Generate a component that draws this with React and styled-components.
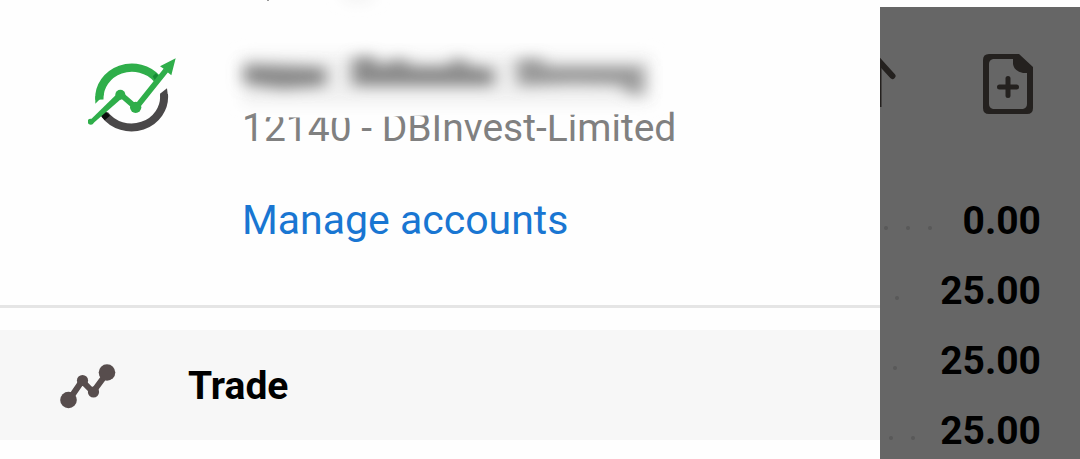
import React from "react";
import styled, { createGlobalStyle } from "styled-components";

const balances = [
  { id: 1, value: "0.00", dots: 3, indent: 4 },
  { id: 2, value: "25.00", dots: 1, indent: 15 },
  { id: 3, value: "25.00", dots: 1, indent: 13 },
  { id: 4, value: "25.00", dots: 2, indent: 9 },
];

const BrokerLogo = () => (
  <svg width="88" height="76" viewBox="54 50 264 228" fill="none" aria-hidden="true">
    <path d="M88 178A98 92 0 0 1 262 116" stroke="#2fae4a" strokeWidth="25" />
    <path d="M76 190L76 168L102 160L100 166Z" fill="#2fae4a" />
    <path d="M248 108L258 98L270 112L258 126Z" fill="#168a35" />
    <path d="M282 162A98 92 0 0 1 104 222" stroke="#4a4849" strokeWidth="24" />
    <path d="M270 160L291 144L294 170L271 172Z" fill="#4a4849" />
    <path d="M90 223L104 210L120 226L104 240Z" fill="#0c0c0c" />
    <path d="M60 240L146 156L160 170L68 250Z" fill="#2fae4a" />
    <path d="M152 162L198 202L288 90" stroke="#2fae4a" strokeWidth="17" />
    <circle cx="62" cy="244" r="9" fill="#2fae4a" />
    <circle cx="151" cy="163" r="15" fill="#2fae4a" />
    <circle cx="197" cy="201" r="17" fill="#2fae4a" />
    <path d="M317 54L270 78L279 84L291 94L304 105Z" fill="#2fae4a" />
  </svg>
);

// hidden holder name, smeared over the top edge of the account number
const HiddenName = () => (
  <Smear viewBox="0 0 450 120" role="img" aria-label="Name hidden">
    <defs>
      <filter id="soft" x="-20%" y="-80%" width="140%" height="260%">
        <feGaussianBlur stdDeviation="8 7" />
      </filter>
      <filter id="haze" x="-20%" y="-60%" width="140%" height="220%">
        <feGaussianBlur stdDeviation="7" />
      </filter>
    </defs>
    <path d="M18 40H450V108L400 114L300 115L200 115L100 118L18 117Z" fill="#fefefe" />
    <g filter="url(#haze)" fill="#f1f1f1">
      <rect x="0" y="54" width="410" height="50" />
      <ellipse cx="116" cy="-3" rx="18" ry="5" />
    </g>
    <g filter="url(#soft)" fill="#8a8a8a">
      <path d="M2 64L84 67V86L40 89L2 84Z" />
      <path d="M110 58L130 56L138 66L158 58L170 66L206 66L216 57L228 66L252 68V86H110Z" />
      <path d="M274 60L296 58L306 66H402L402 94H388L378 85L330 84L276 86Z" opacity="0.85" />
    </g>
    <rect x="25" y="0" width="2" height="1" fill="#999" />
  </Smear>
);

const TradeIcon = () => (
  <svg width="56" height="46" viewBox="0 0 56 46" aria-hidden="true">
    <path d="M9 37L22 18L33 29L47 10" fill="none" stroke="#574d4d" strokeWidth="6" />
    <g fill="#574d4d">
      <circle cx="8.5" cy="37" r="8.3" />
      <circle cx="22.5" cy="17.5" r="5.6" />
      <circle cx="33.5" cy="29" r="5.6" />
      <circle cx="47" cy="9.5" r="8.3" />
    </g>
  </svg>
);

const ArrowIcon = () => (
  <svg width="16" height="60" viewBox="0 0 16 60" aria-hidden="true">
    <path d="M-3 5L12.500 22" stroke="#24211f" strokeWidth="6" strokeLinecap="round" />
    <path d="M0 8V53" stroke="#24211f" strokeWidth="3" />
  </svg>
);

const NewOrderIcon = () => (
  <svg width="50" height="60" viewBox="0 0 50 60" aria-hidden="true">
    <path
      fill="#24211f"
      fillRule="evenodd"
      d="M6 0H36L50 13V54Q50 60 44 60H6Q0 60 0 54V6Q0 0 6 0ZM10 5Q6 6 6 10V50Q6 54 10 55H40Q44 54 44 50V19H40Q31 17 30 10V5Z"
    />
    <path d="M25 24.500V41.500M16.500 33H33.500" stroke="#24211f" strokeWidth="5" strokeLinecap="round" />
  </svg>
);

const App = () => {
  return (
    <>
      <GlobalStyle />
      <Page>
        <Drawer>
          <Account>
            <LogoArea>
              <BrokerLogo />
            </LogoArea>
            <AccountInfo>
              <HiddenName />
              <AccountNumber>12140 - DBInvest-Limited</AccountNumber>
              <ManageLink href="#accounts">Manage accounts</ManageLink>
            </AccountInfo>
          </Account>
          <nav>
            <MenuButton type="button">
              <TradeIcon />
              Trade
            </MenuButton>
          </nav>
        </Drawer>
        <Backdrop>
          <Toolbar>
            <IconButton type="button" aria-label="Sort">
              <ArrowIcon />
            </IconButton>
            <IconButton type="button" aria-label="New order">
              <NewOrderIcon />
            </IconButton>
          </Toolbar>
          <BalanceList>
            {balances.map((item) => (
              <BalanceRow key={item.id}>
                <Leader $indent={item.indent}>
                  {Array.from({ length: item.dots }, (_, i) => (
                    <Dot key={i} />
                  ))}
                </Leader>
                {item.value}
              </BalanceRow>
            ))}
          </BalanceList>
        </Backdrop>
      </Page>
    </>
  );
};

export default App;

const GlobalStyle = createGlobalStyle`
  * {
    box-sizing: border-box;
  }

  body {
    margin: 0;
    background-color: #fefefe;
    font-family: Roboto, "Liberation Sans", sans-serif;
    font-size: 39px;
    line-height: 48px;
  }
`;

const Page = styled.div`
  display: flex;
  height: 100vh;
  overflow: hidden;
`;

const Drawer = styled.aside`
  flex: 1;
  min-width: 0;
`;

const Account = styled.section`
  display: flex;
  margin-bottom: 22px;
  padding-bottom: 61px;
  border-bottom: 3px solid #e5e5e5;
`;

const LogoArea = styled.div`
  flex: none;
  width: 242px;
  padding: 57px 0 0 88px;
`;

const AccountInfo = styled.div`
  display: flex;
  flex-direction: column;
  align-items: flex-start;
  min-width: 0;
`;

const Smear = styled.svg`
  display: block;
  position: relative;
  z-index: 1;
  width: 450px;
  height: 120px;
  overflow: visible;
  pointer-events: none;
`;

const AccountNumber = styled.p`
  margin: -16px 0 44px;
  color: #808080;
`;

const ManageLink = styled.a`
  color: #1976d2;
  font-size: 41px;
  text-decoration: none;
`;

const MenuButton = styled.button`
  display: flex;
  align-items: center;
  gap: 72px;
  width: 100%;
  height: 110px;
  padding: 2px 60px 0;
  border: none;
  background-color: #f7f7f7;
  color: #000;
  font: inherit;
  font-weight: 700;
  cursor: pointer;
`;

const Backdrop = styled.main`
  flex: none;
  width: 200px;
  margin-top: 7px;
  background-color: #666;
`;

const Toolbar = styled.header`
  display: flex;
  justify-content: space-between;
  height: 178px;
  padding: 47px 47px 0 0;
`;

const IconButton = styled.button`
  display: flex;
  align-self: flex-start;
  padding: 0;
  border: none;
  background: none;
  cursor: pointer;
`;

const BalanceList = styled.ul`
  margin: 0;
  padding: 0;
  list-style: none;
`;

const BalanceRow = styled.li`
  display: flex;
  align-items: center;
  justify-content: space-between;
  height: 70px;
  padding: 2px 39px 0 0;
  color: #000;
  font-weight: 700;
`;

const Leader = styled.span`
  display: flex;
  gap: 18px;
  padding: 14px 0 0 ${({ $indent }) => $indent}px;
`;

const Dot = styled.span`
  width: 4px;
  height: 4px;
  border-radius: 50%;
  background-color: #595959;
`;
